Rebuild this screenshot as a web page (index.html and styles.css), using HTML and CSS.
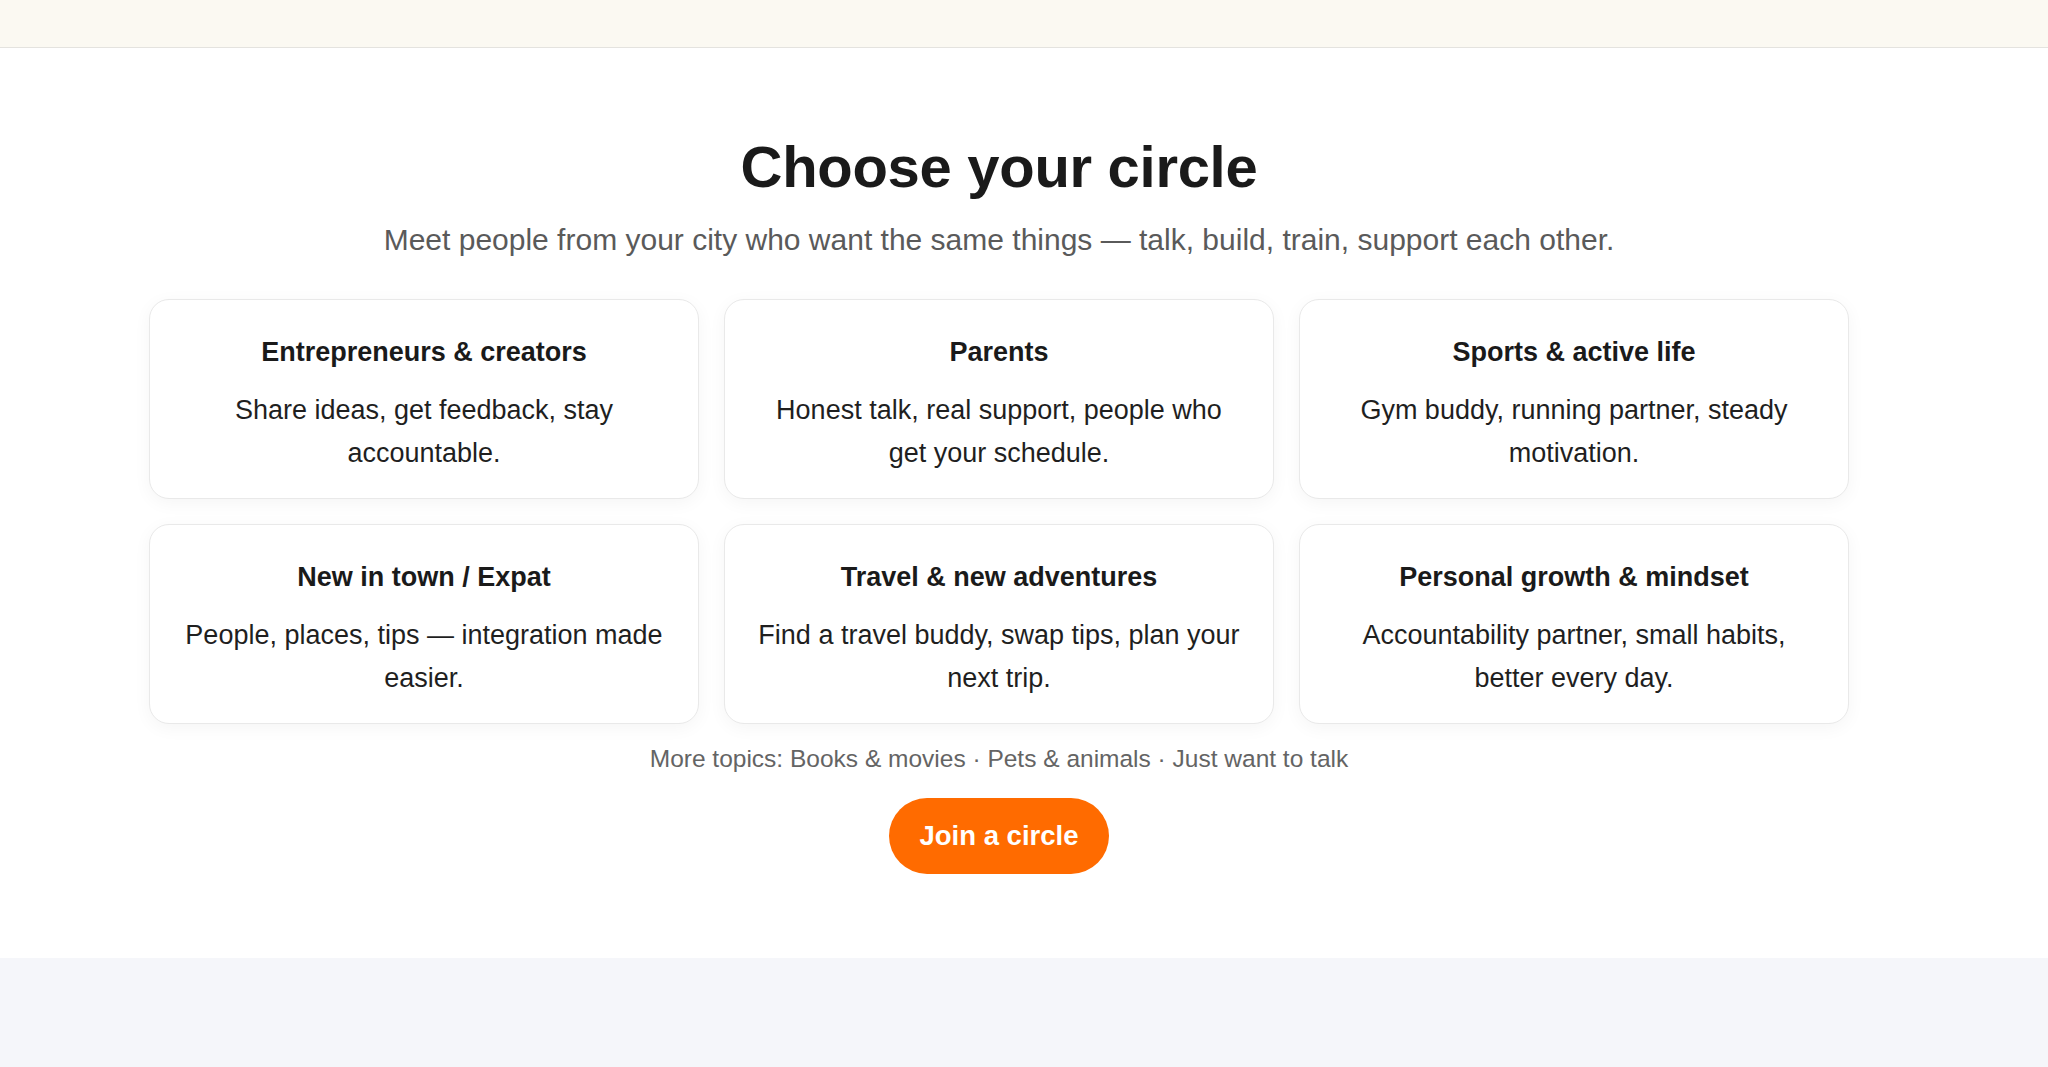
FILE: index.html
```html
<!DOCTYPE html>
<html>
	<head>
		<meta charset="utf-8">
		<title>Choose your circle</title>
		<link rel="stylesheet" href="styles.css">
	</head>
	<body>
		<div class="topbar"></div>
		<div class="circles">
			<div class="circles-inner">
				<h1 class="circles-title">Choose your circle</h1>
				<p class="circles-lead">Meet people from your city who want the same things — talk, build, train, support each other.</p>
				<div class="circle-grid">
					<div class="circle-card">
						<h3 class="circle-card-name">Entrepreneurs &amp; creators</h3>
						<p class="circle-card-text">Share ideas, get feedback, stay accountable.</p>
					</div>
					<div class="circle-card">
						<h3 class="circle-card-name">Parents</h3>
						<p class="circle-card-text">Honest talk, real support, people who get your schedule.</p>
					</div>
					<div class="circle-card">
						<h3 class="circle-card-name">Sports &amp; active life</h3>
						<p class="circle-card-text">Gym buddy, running partner, steady motivation.</p>
					</div>
					<div class="circle-card">
						<h3 class="circle-card-name">New in town / Expat</h3>
						<p class="circle-card-text">People, places, tips — integration made easier.</p>
					</div>
					<div class="circle-card">
						<h3 class="circle-card-name">Travel &amp; new adventures</h3>
						<p class="circle-card-text">Find a travel buddy, swap tips, plan your next trip.</p>
					</div>
					<div class="circle-card">
						<h3 class="circle-card-name">Personal growth &amp; mindset</h3>
						<p class="circle-card-text">Accountability partner, small habits, better every day.</p>
					</div>
				</div>
				<p class="circles-more">More topics: Books &amp; movies · Pets &amp; animals · Just want to talk</p>
				<div class="circles-action">
					<a class="btn-join" href="#">Join a circle</a>
				</div>
			</div>
		</div>
		<div class="next-section"></div>
	</body>
</html>
```

FILE: styles.css
```css
html,
body
{
	margin: 0;
	padding: 0;
	height: 100%;
}
body
{
	display: flex;
	flex-direction: column;
	font-family: "Liberation Sans", Arial, Helvetica, sans-serif;
	color: #1b1b1b;
	background-color: #f5f6fa;
}
.topbar
{
	height: 47px;
	flex-shrink: 0;
	background-color: #fbf9f2;
	border-bottom: 1px solid #e4e3df;
	box-shadow: 0 2px 4px rgba(0, 0, 0, 0.03);
}
.circles
{
	background-color: #ffffff;
	padding: 83px 0 84px;
}
.circles-inner
{
	width: 1700px;
	margin-left: 149px;
	text-align: center;
}
.circles-title
{
	margin: 0;
	font-size: 58px;
	line-height: 72px;
	font-weight: bold;
	letter-spacing: -0.3px;
	color: #1a1a1a;
}
.circles-lead
{
	margin: 16px 0 0;
	font-size: 30px;
	line-height: 42px;
	color: #5a5a5a;
}
.circle-grid
{
	display: grid;
	grid-template-columns: repeat(3, 1fr);
	gap: 25px;
	margin-top: 38px;
}
.circle-card
{
	background-color: #ffffff;
	border: 1px solid #e9e9e9;
	border-radius: 20px;
	box-shadow: 0 4px 18px rgba(0, 0, 0, 0.045);
	padding: 33px 30px 23px;
}
.circle-card-name
{
	margin: 0;
	font-size: 27px;
	line-height: 38px;
	font-weight: bold;
	color: #1a1a1a;
}
.circle-card-text
{
	margin: 18px 0 0;
	font-size: 27px;
	line-height: 43px;
	color: #1f1f1f;
}
.circles-more
{
	margin: 18px 0 0;
	font-size: 24.5px;
	line-height: 34px;
	color: #646464;
}
.circles-action
{
	margin-top: 22px;
}
.btn-join
{
	display: inline-block;
	padding: 19px 31px;
	border-radius: 38px;
	background-color: #ff6b00;
	color: #ffffff;
	font-size: 27.5px;
	line-height: 38px;
	font-weight: bold;
	text-decoration: none;
}
.next-section
{
	flex-grow: 1;
	background-color: #f5f6fa;
}
```
